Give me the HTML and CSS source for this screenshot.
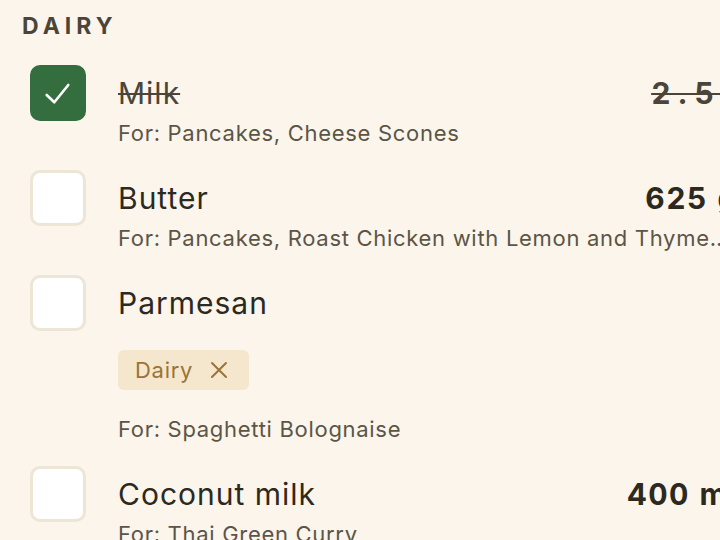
FILE: index.html
```html
<!DOCTYPE html>
<html lang="en">
<head>
  <meta charset="UTF-8" />
  <meta name="viewport" content="width=device-width, initial-scale=1.0" />
  <title>Shopping List</title>
  <link rel="stylesheet" href="styles.css">
</head>
<body>
  <section class="group">
    <h2 class="group-title">Dairy</h2>

    <ul class="items">
      <li class="item done">
        <span class="check">
          <svg width="32" height="32" viewBox="0 0 32 32"><path d="M4.7 18l7.6 7.3L26.3 8" fill="none" stroke="#fff" stroke-width="2.6" stroke-linecap="round" stroke-linejoin="round"/></svg>
        </span>
        <div class="body">
          <div class="head">
            <span class="name">Milk</span>
            <span class="qty">2.5 L</span>
          </div>
          <p class="meta">For: Pancakes, Cheese Scones</p>
        </div>
      </li>

      <li class="item">
        <span class="check"></span>
        <div class="body">
          <div class="head">
            <span class="name">Butter</span>
            <span class="qty">625 g</span>
          </div>
          <p class="meta clip">For: Pancakes, Roast Chicken with Lemon and Thyme, Cheese Scones</p>
        </div>
      </li>

      <li class="item">
        <span class="check"></span>
        <div class="body">
          <div class="head">
            <span class="name">Parmesan</span>
          </div>
          <div class="tags">
            <span class="tag">Dairy
              <svg width="20" height="20" viewBox="0 0 20 20"><path d="M3 3l14 14M17 3L3 17" stroke="currentColor" stroke-width="2" stroke-linecap="round"/></svg>
            </span>
          </div>
          <p class="meta">For: Spaghetti Bolognaise</p>
        </div>
      </li>

      <li class="item">
        <span class="check"></span>
        <div class="body">
          <div class="head">
            <span class="name">Coconut milk</span>
            <span class="qty">400 ml</span>
          </div>
          <p class="meta">For: Thai Green Curry</p>
        </div>
      </li>
    </ul>
  </section>
</body>
</html>
```

FILE: styles.css
```css
html, body {
  overflow: hidden;
}
body {
  margin: 0;
  background: #fbf5ec;
  color: #2c2921;
  font-family: Inter, 'Noto Sans', sans-serif;
  width: 720px;
  height: 540px;
}
.group {
  width: 738px;
  padding: 12px 0 0 22px;
  box-sizing: border-box;
}
.group-title {
  margin: 0 0 25px;
  font-size: 23px;
  line-height: 28px;
  font-weight: 700;
  letter-spacing: 5px;
  text-transform: uppercase;
  color: #4a4538;
}
.items {
  list-style: none;
  margin: 0;
  padding: 0 0 0 8px;
  display: flex;
  flex-direction: column;
  gap: 24px;
}
.item {
  display: flex;
  gap: 32px;
}
.check {
  flex: none;
  width: 56px;
  height: 56px;
  box-sizing: border-box;
  border: 3px solid #ede6d7;
  border-radius: 10px;
  background: #ffffff;
  display: flex;
  align-items: center;
  justify-content: center;
}
.item.done .check {
  background: #346e3f;
  border-color: #346e3f;
}
.body {
  flex: 1;
  min-width: 0;
}
.head {
  height: 56px;
  display: flex;
  align-items: center;
  justify-content: space-between;
}
.name {
  font-size: 30px;
  letter-spacing: 1px;
  color: #2c2921;
}
.qty {
  font-size: 30px;
  font-weight: 700;
  letter-spacing: 1.5px;
  font-variant-numeric: tabular-nums;
  color: #2c2921;
}
.item.done .name,
.item.done .qty {
  color: #4a4538;
  text-decoration: line-through;
  text-decoration-thickness: 2px;
}
.item.done .qty {
  letter-spacing: 8px;
  margin-right: -25px;
}
.meta {
  margin: 0;
  font-size: 22px;
  line-height: 25px;
  letter-spacing: 0.7px;
  color: #5b5547;
}
.meta.clip {
  width: 612px;
  white-space: nowrap;
  overflow: hidden;
  text-overflow: ellipsis;
}
.tags {
  margin: 19px 0 27px;
  display: flex;
}
.tag {
  height: 40px;
  padding: 0 20px 0 17px;
  display: inline-flex;
  align-items: center;
  gap: 16px;
  border-radius: 6px;
  background: #f4e7cd;
  color: #9a7436;
  font-size: 22px;
  letter-spacing: 0.7px;
}
```
